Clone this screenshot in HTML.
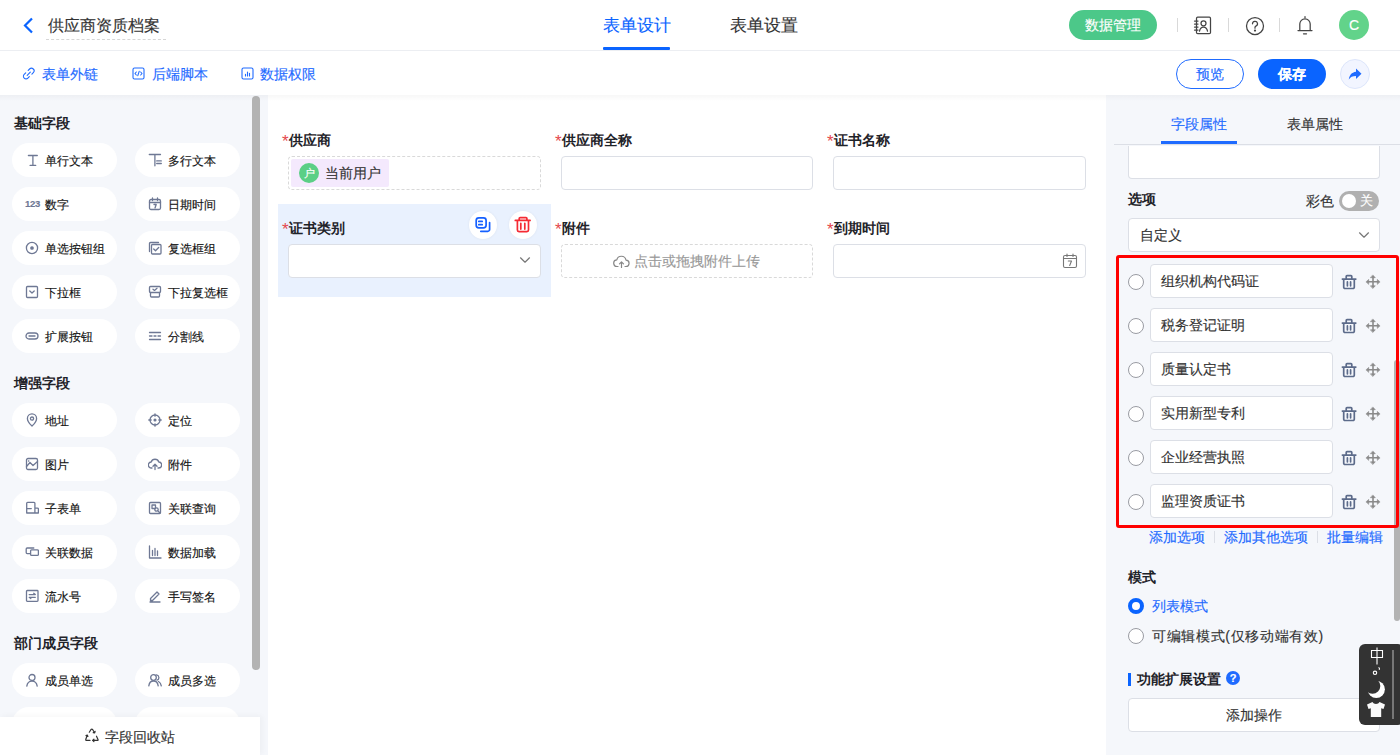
<!DOCTYPE html>
<html><head><meta charset="utf-8">
<style>
*{box-sizing:border-box;margin:0;padding:0}
html,body{width:1400px;height:755px;overflow:hidden;background:#fff;font-family:"Liberation Sans",sans-serif;color:#333;-webkit-text-stroke:0.15px}
.a{position:absolute}
svg{display:block}
#hdr{left:0;top:0;width:1400px;height:51px;border-bottom:1px solid #eceef2;background:#fff}
#bar{left:0;top:51px;width:1400px;height:44px;background:#fff}
#left{left:0;top:95px;width:268px;height:660px;background:#f5f7fb}
#center{left:268px;top:95px;width:838px;height:660px;background:#fff}
#right{left:1106px;top:95px;width:294px;height:660px;background:#f5f7fb}
.shadow{left:0;top:95px;width:1400px;height:6px;background:linear-gradient(rgba(0,0,0,0.03),rgba(0,0,0,0))}
.h{font-size:14px;font-weight:bold;color:#1f2329;-webkit-text-stroke:0}
.pill{width:105px;height:34px;border-radius:17px;background:#fff;font-size:12px;color:#141414;line-height:34px}
.pill .ic{position:absolute;left:13px;top:10px;width:14px;height:14px}
.pill span{position:absolute;left:33px;top:1px}
.lbl{font-size:14px;font-weight:bold;color:#1f2329;line-height:16px;-webkit-text-stroke:0}
.lbl i{font-style:normal;color:#e5484d;font-weight:normal;display:inline-block;width:7px;font-size:17px;vertical-align:top;line-height:19px}
.inp{border:1px solid #dcdfe6;border-radius:4px;background:#fff}
.opt .r{position:absolute;width:16px;height:16px;border:1px solid #9a9ca3;border-radius:50%;background:#fff}
.link{color:#1f6bff;font-size:14px}
b,.bd{-webkit-text-stroke:0}
</style></head><body>
<!-- header -->
<div id="hdr" class="a"></div>
<div class="a" style="left:22px;top:17px"><svg width="12" height="17" viewBox="0 0 12 17"><path d="M10 1.5 L3 8.5 L10 15.5" fill="none" stroke="#0a64ff" stroke-width="2.2"/></svg></div>
<div class="a" style="left:48px;top:15px;font-size:16px;color:#333;line-height:22px">供应商资质档案</div>
<div class="a" style="left:46px;top:39px;width:120px;border-top:1px dashed #d6d6d6"></div>
<div class="a" style="left:603px;top:13px;font-size:16.5px;color:#0a64ff;line-height:24px">表单设计</div>
<div class="a" style="left:603px;top:47px;width:67px;height:3px;background:#0a64ff;border-radius:1px"></div>
<div class="a" style="left:730px;top:13px;font-size:16.5px;color:#333;line-height:24px">表单设置</div>
<div class="a" style="left:1069px;top:10px;width:88px;height:30px;border-radius:15px;background:#4cc889;color:#fff;font-size:14px;line-height:30px;text-align:center">数据管理</div>
<div id="bar" class="a"></div>
<div id="left" class="a"></div>
<div id="center" class="a"></div>
<div id="right" class="a"></div>
<div class="a" style="left:1177px;top:18px;width:1px;height:14px;background:#d9d9d9"></div>
<div class="a" style="left:1228px;top:18px;width:1px;height:14px;background:#d9d9d9"></div>
<div class="a" style="left:1279px;top:18px;width:1px;height:14px;background:#d9d9d9"></div>
<div class="a" style="left:1193px;top:16px"><svg width="19" height="19" viewBox="0 0 19 19" fill="none" stroke="#444" stroke-width="1.25" stroke-linecap="round" stroke-linejoin="round"><rect x="3.5" y="1.2" width="14" height="16.5" rx="1.2"/><path d="M1.5 5h3.5M1.5 8h3.5M1.5 11h3.5M1.5 14h3.5"/><circle cx="10.5" cy="7.3" r="2.5"/><path d="M6.5 15.2c0.4-2.6 2-4.2 4-4.2s3.6 1.6 4 4.2"/></svg></div>
<div class="a" style="left:1245px;top:16px"><svg width="20" height="20" viewBox="0 0 20 20" fill="none" stroke="#444" stroke-width="1.25" stroke-linecap="round" stroke-linejoin="round"><circle cx="10" cy="10" r="8.5"/><path d="M7.5 7.8a2.5 2.5 0 1 1 3.4 2.3c-0.6 0.3-0.9 0.8-0.9 1.5v0.6"/><circle cx="10" cy="14.6" r="0.5" fill="#444"/></svg></div>
<div class="a" style="left:1296px;top:15px"><svg width="18" height="21" viewBox="0 0 18 21" fill="none" stroke="#444" stroke-width="1.25" stroke-linecap="round" stroke-linejoin="round"><path d="M9 1.5v1.3M3.8 15.5V9a5.2 5.2 0 0 1 10.4 0v6.5M2 15.5h14M7.5 18.8h3"/></svg></div>
<div class="a" style="left:1339px;top:10px;width:30px;height:30px;border-radius:50%;background:#62d38a;color:#fff;font-size:14px;line-height:30px;text-align:center">C</div>
<div class="a" style="left:22px;top:67px"><svg width="13" height="13" viewBox="0 0 13 13" fill="none" stroke="#1f6bff" stroke-width="1.1" stroke-linecap="round" stroke-linejoin="round"><path d="M5.2 8.3L8.3 5.2M6.2 3.4l1.4-1.4a2.6 2.6 0 0 1 3.7 3.7L9.9 7.1M3.7 5.9L2.2 7.4a2.6 2.6 0 0 0 3.7 3.7l1.4-1.4"/></svg></div>
<div class="a" style="left:42px;top:64px;font-size:14px;color:#1f6bff;line-height:20px">表单外链</div>
<div class="a" style="left:132px;top:67px"><svg width="13" height="13" viewBox="0 0 13 13" fill="none" stroke="#1f6bff" stroke-width="1.1" stroke-linecap="round" stroke-linejoin="round"><rect x="1" y="1" width="11" height="11" rx="1.5"/><path d="M4.3 5L3 6.5 4.3 8M8.7 5L10 6.5 8.7 8M7.2 4.3L5.8 8.7"/></svg></div>
<div class="a" style="left:152px;top:64px;font-size:14px;color:#1f6bff;line-height:20px">后端脚本</div>
<div class="a" style="left:241px;top:67px"><svg width="13" height="13" viewBox="0 0 13 13" fill="none" stroke="#1f6bff" stroke-width="1.1" stroke-linecap="round" stroke-linejoin="round"><rect x="1" y="1" width="11" height="11" rx="1.5"/><path d="M4.5 9V7.3M6.5 9V5M8.5 9V6.3"/></svg></div>
<div class="a" style="left:260px;top:64px;font-size:14px;color:#1f6bff;line-height:20px">数据权限</div>
<div class="a" style="left:1176px;top:59px;width:68px;height:30px;border-radius:15px;border:1px solid #1f6bff;color:#1f6bff;font-size:14px;line-height:28px;text-align:center;background:#fff">预览</div>
<div class="a" style="left:1258px;top:59px;width:68px;height:30px;border-radius:15px;background:#0a64ff;color:#fff;font-size:14px;font-weight:bold;line-height:30px;text-align:center">保存</div>
<div class="a" style="left:1340px;top:59px;width:30px;height:30px;border-radius:50%;background:#f2f5ff;border:1px solid #dde6fb"></div>
<div class="a" style="left:1347px;top:66px"><svg width="16" height="16" viewBox="0 0 16 16"><path d="M9 2.5L14.5 7.8 9 13V10C5.5 10 3.3 11 1.8 13.5 2.3 9.3 4.5 6.3 9 5.7z" fill="#1f6bff"/></svg></div>
<div class="a h" style="left:14px;top:115px">基础字段</div>
<div class="a pill" style="left:12px;top:143px"><div class="ic"><svg width="14" height="14" viewBox="0 0 14 14" fill="none" stroke="#6e7894" stroke-width="1.3" stroke-linecap="round" stroke-linejoin="round"><path d="M3.4 2.5h8.9M5.1 12.4h5.6M7.9 2.5v9.9"/></svg></div><span>单行文本</span></div>
<div class="a pill" style="left:135px;top:143px"><div class="ic"><svg width="14" height="14" viewBox="0 0 14 14" fill="none" stroke="#6e7894" stroke-width="1.3" stroke-linecap="round" stroke-linejoin="round"><path d="M1.3 1.5h11.2M6.9 1.5v11.3M8.7 7.9h4.6M8.7 10.5h4.6"/></svg></div><span>多行文本</span></div>
<div class="a pill" style="left:12px;top:187px"><div class="ic"><div style="font:bold 9.5px 'Liberation Sans',sans-serif;color:#6e7894;letter-spacing:-0.3px;line-height:14px">123</div></div><span>数字</span></div>
<div class="a pill" style="left:135px;top:187px"><div class="ic"><svg width="14" height="14" viewBox="0 0 14 14" fill="none" stroke="#6e7894" stroke-width="1.3" stroke-linecap="round" stroke-linejoin="round"><rect x="1.5" y="2.5" width="11" height="10" rx="1.5"/><path d="M1.5 5.5h11M4.5 1v2.5M9.5 1v2.5M6 7.5h2.2l-1.2 3.5"/></svg></div><span>日期时间</span></div>
<div class="a pill" style="left:12px;top:231px"><div class="ic"><svg width="14" height="14" viewBox="0 0 14 14" fill="none" stroke="#6e7894" stroke-width="1.3" stroke-linecap="round" stroke-linejoin="round"><circle cx="7" cy="7" r="5.6"/><circle cx="7" cy="7" r="1.2" fill="#6e7894"/></svg></div><span>单选按钮组</span></div>
<div class="a pill" style="left:135px;top:231px"><div class="ic"><svg width="14" height="14" viewBox="0 0 14 14" fill="none" stroke="#6e7894" stroke-width="1.3" stroke-linecap="round" stroke-linejoin="round"><path d="M1.5 10.5V2.5a1 1 0 0 1 1-1h8"/><rect x="3.5" y="3.5" width="9.5" height="9.5" rx="1"/><path d="M5.7 8l1.8 1.8 3.2-3.3"/></svg></div><span>复选框组</span></div>
<div class="a pill" style="left:12px;top:275px"><div class="ic"><svg width="14" height="14" viewBox="0 0 14 14" fill="none" stroke="#6e7894" stroke-width="1.3" stroke-linecap="round" stroke-linejoin="round"><rect x="1.5" y="1.5" width="11" height="11" rx="1"/><path d="M4.8 6l2.2 2 2.2-2"/></svg></div><span>下拉框</span></div>
<div class="a pill" style="left:135px;top:275px"><div class="ic"><svg width="14" height="14" viewBox="0 0 14 14" fill="none" stroke="#6e7894" stroke-width="1.3" stroke-linecap="round" stroke-linejoin="round"><rect x="1.5" y="1.5" width="11" height="6" rx="1"/><path d="M2.5 7.5v3.5a1 1 0 0 0 1 1h7a1 1 0 0 0 1-1v-3.5M5 4.2l1.5 1.2 2.5-2.2"/></svg></div><span>下拉复选框</span></div>
<div class="a pill" style="left:12px;top:319px"><div class="ic"><svg width="14" height="14" viewBox="0 0 14 14" fill="none" stroke="#6e7894" stroke-width="1.3" stroke-linecap="round" stroke-linejoin="round"><rect x="1" y="4" width="12" height="6" rx="3"/><path d="M4 7h6"/></svg></div><span>扩展按钮</span></div>
<div class="a pill" style="left:135px;top:319px"><div class="ic"><svg width="14" height="14" viewBox="0 0 14 14" fill="none" stroke="#6e7894" stroke-width="1.3" stroke-linecap="round" stroke-linejoin="round"><path d="M1.5 3.5h11M1.5 10.5h11M1.5 7h2.5M6 7h2M10 7h2.5"/></svg></div><span>分割线</span></div>
<div class="a h" style="left:14px;top:375px">增强字段</div>
<div class="a pill" style="left:12px;top:403px"><div class="ic"><svg width="14" height="14" viewBox="0 0 14 14" fill="none" stroke="#6e7894" stroke-width="1.3" stroke-linecap="round" stroke-linejoin="round"><path d="M7 13s-4.6-4.2-4.6-7.6a4.6 4.6 0 0 1 9.2 0C11.6 8.8 7 13 7 13z"/><circle cx="7" cy="5.6" r="1.6"/></svg></div><span>地址</span></div>
<div class="a pill" style="left:135px;top:403px"><div class="ic"><svg width="14" height="14" viewBox="0 0 14 14" fill="none" stroke="#6e7894" stroke-width="1.3" stroke-linecap="round" stroke-linejoin="round"><circle cx="7" cy="7" r="5"/><circle cx="7" cy="7" r="0.9" fill="#6e7894"/><path d="M7 0.8v2.4M7 10.8v2.4M0.8 7h2.4M10.8 7h2.4"/></svg></div><span>定位</span></div>
<div class="a pill" style="left:12px;top:447px"><div class="ic"><svg width="14" height="14" viewBox="0 0 14 14" fill="none" stroke="#6e7894" stroke-width="1.3" stroke-linecap="round" stroke-linejoin="round"><rect x="1.5" y="1.5" width="11" height="11" rx="1.5"/><path d="M1.5 9.5l3.5-4 3 3 4.5-4M3.5 4h0.3"/></svg></div><span>图片</span></div>
<div class="a pill" style="left:135px;top:447px"><div class="ic"><svg width="14" height="14" viewBox="0 0 14 14" fill="none" stroke="#6e7894" stroke-width="1.3" stroke-linecap="round" stroke-linejoin="round"><path d="M4 11H3.5A3 3 0 0 1 3.2 5a4 4 0 0 1 7.6 0A3 3 0 0 1 10.5 11H10M7 7.5v5M5 9.3l2-2 2 2"/></svg></div><span>附件</span></div>
<div class="a pill" style="left:12px;top:491px"><div class="ic"><svg width="14" height="14" viewBox="0 0 14 14" fill="none" stroke="#6e7894" stroke-width="1.3" stroke-linecap="round" stroke-linejoin="round"><path d="M1.7 12V2.3q0-0.9 0.9-0.9h6.4q0.9 0 0.9 0.9V12zM9.9 7.2h2.6q0.9 0 0.9 0.9V12H1.7M1.7 7.6h4.6"/></svg></div><span>子表单</span></div>
<div class="a pill" style="left:135px;top:491px"><div class="ic"><svg width="14" height="14" viewBox="0 0 14 14" fill="none" stroke="#6e7894" stroke-width="1.3" stroke-linecap="round" stroke-linejoin="round"><rect x="1.5" y="1.5" width="11" height="11" rx="1"/><rect x="4" y="4" width="3.5" height="3.5"/><circle cx="8.5" cy="8.5" r="1.7"/><path d="M10 10l2 2"/></svg></div><span>关联查询</span></div>
<div class="a pill" style="left:12px;top:535px"><div class="ic"><svg width="14" height="14" viewBox="0 0 14 14" fill="none" stroke="#6e7894" stroke-width="1.3" stroke-linecap="round" stroke-linejoin="round"><path d="M8.8 3H2.2q-1 0-1 1v3.6q0 1 1 1h3.2"/><rect x="5.6" y="4.8" width="7.8" height="5.6" rx="1"/></svg></div><span>关联数据</span></div>
<div class="a pill" style="left:135px;top:535px"><div class="ic"><svg width="14" height="14" viewBox="0 0 14 14" fill="none" stroke="#6e7894" stroke-width="1.3" stroke-linecap="round" stroke-linejoin="round"><path d="M1.5 1v12h11.5M4.5 5.5v5M7 3.5v7M9.5 6v4.5"/></svg></div><span>数据加载</span></div>
<div class="a pill" style="left:12px;top:579px"><div class="ic"><svg width="14" height="14" viewBox="0 0 14 14" fill="none" stroke="#6e7894" stroke-width="1.3" stroke-linecap="round" stroke-linejoin="round"><rect x="1.5" y="1.5" width="11.5" height="10.8" rx="0.8"/><path d="M4.2 5.6h6.1l-1.6-1.3M10.3 8.3H4.2l1.6 1.3"/></svg></div><span>流水号</span></div>
<div class="a pill" style="left:135px;top:579px"><div class="ic"><svg width="14" height="14" viewBox="0 0 14 14" fill="none" stroke="#6e7894" stroke-width="1.3" stroke-linecap="round" stroke-linejoin="round"><path d="M2.5 9.5l6.5-6.5 2 2-6.5 6.5H2.5zM2 13h10"/></svg></div><span>手写签名</span></div>
<div class="a h" style="left:14px;top:635px">部门成员字段</div>
<div class="a pill" style="left:12px;top:663px"><div class="ic"><svg width="14" height="14" viewBox="0 0 14 14" fill="none" stroke="#6e7894" stroke-width="1.3" stroke-linecap="round" stroke-linejoin="round"><circle cx="7" cy="4.5" r="3"/><path d="M1.8 13.2c0.5-3 2.5-5 5.2-5s4.7 2 5.2 5"/></svg></div><span>成员单选</span></div>
<div class="a pill" style="left:135px;top:663px"><div class="ic"><svg width="14" height="14" viewBox="0 0 14 14" fill="none" stroke="#6e7894" stroke-width="1.3" stroke-linecap="round" stroke-linejoin="round"><circle cx="5.5" cy="4.5" r="2.8"/><path d="M0.8 12.8c0.4-2.8 2.2-4.8 4.7-4.8s4.3 2 4.7 4.8M8.5 1.8a2.8 2.8 0 0 1 0.5 5.4M10.5 8.5c1.5 0.8 2.5 2.4 2.8 4.3"/></svg></div><span>成员多选</span></div>
<div class="a pill" style="left:12px;top:707px"></div><div class="a pill" style="left:135px;top:707px"></div>
<div class="a" style="left:252px;top:96px;width:8px;height:574px;border-radius:4px;background:#b3b3b3"></div>
<div class="a" style="left:0;top:717px;width:260px;height:38px;background:#fff;box-shadow:2px -1px 6px rgba(0,0,0,0.04)"></div>
<div class="a" style="left:80px;top:722px"><svg width="24" height="26" viewBox="0 0 24 26" fill="none" stroke="#333" stroke-width="1.2" stroke-linecap="round" stroke-linejoin="round"><path d="M9.3 10.2L11 7.5Q11.8 6.6 12.6 7.5L14.6 10.8M13.2 10.6l1.5 0.3 0.4-1.5M7.3 13.2L5.8 17.3Q5.5 18.4 6.6 18.4H10M6 13.6l1.3-0.5 0.6 1.3M12.6 18.4H17.4Q18.4 18.4 18 17.4L16.5 14.2M13.9 17.2l-1.3 1.2 1.3 1.1"/></svg></div>
<div class="a" style="left:105px;top:727px;font-size:14px;color:#333;line-height:20px">字段回收站</div>
<div class="a" style="left:278px;top:204px;width:273px;height:93px;background:#e9f1fe"></div>
<div class="a lbl" style="left:282px;top:132px"><i>*</i>供应商</div>
<div class="a lbl" style="left:555px;top:132px"><i>*</i>供应商全称</div>
<div class="a lbl" style="left:827px;top:132px"><i>*</i>证书名称</div>
<div class="a" style="left:288px;top:156px;width:253px;height:34px;border:1px dashed #d9d9d9;border-radius:4px"></div>
<div class="a" style="left:291px;top:159px;width:98px;height:28px;background:#f4e9fd;border-radius:2px"></div>
<div class="a" style="left:299px;top:163px;width:20px;height:20px;border-radius:50%;background:#5bcf86;color:#fff;font-size:11px;line-height:20px;text-align:center">户</div>
<div class="a" style="left:325px;top:163px;font-size:14px;color:#333;line-height:20px">当前用户</div>
<div class="a inp" style="left:561px;top:156px;width:252px;height:34px"></div>
<div class="a inp" style="left:833px;top:156px;width:253px;height:34px"></div>
<div class="a lbl" style="left:282px;top:220px"><i>*</i>证书类别</div>
<div class="a lbl" style="left:555px;top:220px"><i>*</i>附件</div>
<div class="a lbl" style="left:827px;top:220px"><i>*</i>到期时间</div>
<div class="a" style="left:469px;top:211px;width:28px;height:28px;border-radius:50%;background:#fff;box-shadow:0 0 3px rgba(0,0,0,0.06)"></div>
<div class="a" style="left:469px;top:211px"><svg width="28" height="28" viewBox="0 0 28 28" fill="none" stroke="#1560ff" stroke-width="1.7" stroke-linecap="round" stroke-linejoin="round"><rect x="7.2" y="6.9" width="9.9" height="9.9" rx="2.6"/><path d="M9.8 10.4h3.4M9.8 13.7h3.4M11.8 20.3h7a1.8 1.8 0 0 0 1.8-1.8V11.6"/></svg></div>
<div class="a" style="left:509px;top:211px;width:28px;height:28px;border-radius:50%;background:#fff;box-shadow:0 0 3px rgba(0,0,0,0.06)"></div>
<div class="a" style="left:509px;top:211px"><svg width="28" height="28" viewBox="0 0 28 28" fill="none" stroke="#f52a33" stroke-width="1.7" stroke-linecap="round" stroke-linejoin="round"><path d="M6.3 9.4h14.8M10.2 9.2V7.6q0-0.9 0.9-0.9h5.9q0.9 0 0.9 0.9v1.6M8.4 9.8v9.2a1.6 1.6 0 0 0 1.6 1.6h7.9a1.6 1.6 0 0 0 1.6-1.6V9.8M11.8 12.3v5.8M15.8 12.3v5.8"/></svg></div>
<div class="a inp" style="left:288px;top:244px;width:253px;height:34px"></div>
<div class="a" style="left:519px;top:256px"><svg width="12" height="8" viewBox="0 0 12 8" fill="none" stroke="#777" stroke-width="1.2" stroke-linecap="round" stroke-linejoin="round"><path d="M1.5 1.8l4.5 4.4 4.5-4.4"/></svg></div>
<div class="a" style="left:561px;top:244px;width:252px;height:34px;border:1px dashed #d9d9d9;border-radius:4px"></div>
<div class="a" style="left:613px;top:254px"><svg width="17" height="14" viewBox="0 0 17 14" fill="none" stroke="#888" stroke-width="1.2" stroke-linecap="round" stroke-linejoin="round"><path d="M5 12.5H4.2a3.3 3.3 0 0 1-0.4-6.6 4.7 4.7 0 0 1 9.2 0.2 3.2 3.2 0 0 1-0.3 6.4H12M8.5 8v5.5M6.5 9.8l2-2 2 2"/></svg></div>
<div class="a" style="left:634px;top:251px;font-size:14px;color:#999;line-height:20px">点击或拖拽附件上传</div>
<div class="a inp" style="left:833px;top:244px;width:253px;height:34px"></div>
<div class="a" style="left:1062px;top:253px"><svg width="16" height="16" viewBox="0 0 16 16" fill="none" stroke="#777" stroke-width="1.1" stroke-linecap="round" stroke-linejoin="round"><rect x="1.5" y="2.5" width="13" height="12" rx="1.5"/><path d="M1.5 5.5h13M5 1v2.5M11 1v2.5M6.3 8h3.2l-1.8 4.5"/></svg></div>
<div class="a" style="left:1171px;top:114px;font-size:14px;color:#1f6bff;line-height:20px">字段属性</div>
<div class="a" style="left:1287px;top:114px;font-size:14px;color:#333;line-height:20px">表单属性</div>
<div class="a" style="left:1114px;top:144px;width:286px;height:1px;background:#dcdfe6"></div>
<div class="a" style="left:1161px;top:141px;width:76px;height:3px;background:#1f6bff"></div>
<div class="a inp" style="left:1128px;top:146px;width:252px;height:33px;border-top:none;border-radius:0 0 4px 4px"></div>
<div class="a" style="left:1128px;top:189px;font-size:14px;font-weight:bold;color:#1f2329;line-height:20px;-webkit-text-stroke:0">选项</div>
<div class="a" style="left:1306px;top:191px;font-size:14px;color:#333;line-height:20px">彩色</div>
<div class="a" style="left:1339px;top:191px;width:40px;height:20px;border-radius:10px;background:#b0b0b0"></div>
<div class="a" style="left:1342px;top:194px;width:14px;height:14px;border-radius:50%;background:#fff"></div>
<div class="a" style="left:1360px;top:191px;font-size:13px;color:#fff;line-height:20px">关</div>
<div class="a inp" style="left:1128px;top:218px;width:252px;height:34px"></div>
<div class="a" style="left:1140px;top:225px;font-size:14px;color:#333;line-height:20px">自定义</div>
<div class="a" style="left:1358px;top:231px"><svg width="12" height="8" viewBox="0 0 12 8" fill="none" stroke="#777" stroke-width="1.2" stroke-linecap="round" stroke-linejoin="round"><path d="M1.5 1.8l4.5 4.4 4.5-4.4"/></svg></div>
<div class="a" style="left:1394px;top:360px;width:6px;height:261px;border-radius:3px;background:#b3b3b3"></div>
<div class="a" style="left:1116px;top:255px;width:283px;height:273px;border:3px solid #ff0000;border-radius:3px"></div>
<div class="a" style="left:1128px;top:274px;width:16px;height:16px;border:1px solid #9a9ca3;border-radius:50%;background:#fff"></div>
<div class="a inp" style="left:1150px;top:264px;width:183px;height:34px"></div>
<div class="a" style="left:1161px;top:271px;font-size:14px;color:#333;line-height:20px">组织机构代码证</div>
<div class="a" style="left:1341px;top:274px"><svg width="16" height="16" viewBox="0 0 16 16" fill="none" stroke="#5c6b8a" stroke-width="1.7" stroke-linecap="round" stroke-linejoin="round"><path d="M1.4 5.1h13.4M5.2 4.8V2.5q0-0.8 0.8-0.8h4q0.8 0 0.8 0.8v2.3M2.7 5.6v7.6a1.3 1.3 0 0 0 1.3 1.3h8a1.3 1.3 0 0 0 1.3-1.3V5.6M6.4 7.9v3.9M9.6 7.9v3.9"/></svg></div>
<div class="a" style="left:1365px;top:274px"><svg width="16" height="16" viewBox="0 0 16 16" fill="none" stroke="#8a8a8a" stroke-width="1.6" stroke-linecap="round" stroke-linejoin="round"><path d="M8 3v9.5M3 7.7h10"/><path d="M8 1.2l2.3 2.5H5.7zM8 14.3l2.3-2.5H5.7zM1.2 7.7l2.5-2.3v4.6zM14.8 7.7l-2.5-2.3v4.6z" fill="#8a8a8a" stroke-width="0.6"/></svg></div>
<div class="a" style="left:1128px;top:318px;width:16px;height:16px;border:1px solid #9a9ca3;border-radius:50%;background:#fff"></div>
<div class="a inp" style="left:1150px;top:308px;width:183px;height:34px"></div>
<div class="a" style="left:1161px;top:315px;font-size:14px;color:#333;line-height:20px">税务登记证明</div>
<div class="a" style="left:1341px;top:318px"><svg width="16" height="16" viewBox="0 0 16 16" fill="none" stroke="#5c6b8a" stroke-width="1.7" stroke-linecap="round" stroke-linejoin="round"><path d="M1.4 5.1h13.4M5.2 4.8V2.5q0-0.8 0.8-0.8h4q0.8 0 0.8 0.8v2.3M2.7 5.6v7.6a1.3 1.3 0 0 0 1.3 1.3h8a1.3 1.3 0 0 0 1.3-1.3V5.6M6.4 7.9v3.9M9.6 7.9v3.9"/></svg></div>
<div class="a" style="left:1365px;top:318px"><svg width="16" height="16" viewBox="0 0 16 16" fill="none" stroke="#8a8a8a" stroke-width="1.6" stroke-linecap="round" stroke-linejoin="round"><path d="M8 3v9.5M3 7.7h10"/><path d="M8 1.2l2.3 2.5H5.7zM8 14.3l2.3-2.5H5.7zM1.2 7.7l2.5-2.3v4.6zM14.8 7.7l-2.5-2.3v4.6z" fill="#8a8a8a" stroke-width="0.6"/></svg></div>
<div class="a" style="left:1128px;top:362px;width:16px;height:16px;border:1px solid #9a9ca3;border-radius:50%;background:#fff"></div>
<div class="a inp" style="left:1150px;top:352px;width:183px;height:34px"></div>
<div class="a" style="left:1161px;top:359px;font-size:14px;color:#333;line-height:20px">质量认定书</div>
<div class="a" style="left:1341px;top:362px"><svg width="16" height="16" viewBox="0 0 16 16" fill="none" stroke="#5c6b8a" stroke-width="1.7" stroke-linecap="round" stroke-linejoin="round"><path d="M1.4 5.1h13.4M5.2 4.8V2.5q0-0.8 0.8-0.8h4q0.8 0 0.8 0.8v2.3M2.7 5.6v7.6a1.3 1.3 0 0 0 1.3 1.3h8a1.3 1.3 0 0 0 1.3-1.3V5.6M6.4 7.9v3.9M9.6 7.9v3.9"/></svg></div>
<div class="a" style="left:1365px;top:362px"><svg width="16" height="16" viewBox="0 0 16 16" fill="none" stroke="#8a8a8a" stroke-width="1.6" stroke-linecap="round" stroke-linejoin="round"><path d="M8 3v9.5M3 7.7h10"/><path d="M8 1.2l2.3 2.5H5.7zM8 14.3l2.3-2.5H5.7zM1.2 7.7l2.5-2.3v4.6zM14.8 7.7l-2.5-2.3v4.6z" fill="#8a8a8a" stroke-width="0.6"/></svg></div>
<div class="a" style="left:1128px;top:406px;width:16px;height:16px;border:1px solid #9a9ca3;border-radius:50%;background:#fff"></div>
<div class="a inp" style="left:1150px;top:396px;width:183px;height:34px"></div>
<div class="a" style="left:1161px;top:403px;font-size:14px;color:#333;line-height:20px">实用新型专利</div>
<div class="a" style="left:1341px;top:406px"><svg width="16" height="16" viewBox="0 0 16 16" fill="none" stroke="#5c6b8a" stroke-width="1.7" stroke-linecap="round" stroke-linejoin="round"><path d="M1.4 5.1h13.4M5.2 4.8V2.5q0-0.8 0.8-0.8h4q0.8 0 0.8 0.8v2.3M2.7 5.6v7.6a1.3 1.3 0 0 0 1.3 1.3h8a1.3 1.3 0 0 0 1.3-1.3V5.6M6.4 7.9v3.9M9.6 7.9v3.9"/></svg></div>
<div class="a" style="left:1365px;top:406px"><svg width="16" height="16" viewBox="0 0 16 16" fill="none" stroke="#8a8a8a" stroke-width="1.6" stroke-linecap="round" stroke-linejoin="round"><path d="M8 3v9.5M3 7.7h10"/><path d="M8 1.2l2.3 2.5H5.7zM8 14.3l2.3-2.5H5.7zM1.2 7.7l2.5-2.3v4.6zM14.8 7.7l-2.5-2.3v4.6z" fill="#8a8a8a" stroke-width="0.6"/></svg></div>
<div class="a" style="left:1128px;top:450px;width:16px;height:16px;border:1px solid #9a9ca3;border-radius:50%;background:#fff"></div>
<div class="a inp" style="left:1150px;top:440px;width:183px;height:34px"></div>
<div class="a" style="left:1161px;top:447px;font-size:14px;color:#333;line-height:20px">企业经营执照</div>
<div class="a" style="left:1341px;top:450px"><svg width="16" height="16" viewBox="0 0 16 16" fill="none" stroke="#5c6b8a" stroke-width="1.7" stroke-linecap="round" stroke-linejoin="round"><path d="M1.4 5.1h13.4M5.2 4.8V2.5q0-0.8 0.8-0.8h4q0.8 0 0.8 0.8v2.3M2.7 5.6v7.6a1.3 1.3 0 0 0 1.3 1.3h8a1.3 1.3 0 0 0 1.3-1.3V5.6M6.4 7.9v3.9M9.6 7.9v3.9"/></svg></div>
<div class="a" style="left:1365px;top:450px"><svg width="16" height="16" viewBox="0 0 16 16" fill="none" stroke="#8a8a8a" stroke-width="1.6" stroke-linecap="round" stroke-linejoin="round"><path d="M8 3v9.5M3 7.7h10"/><path d="M8 1.2l2.3 2.5H5.7zM8 14.3l2.3-2.5H5.7zM1.2 7.7l2.5-2.3v4.6zM14.8 7.7l-2.5-2.3v4.6z" fill="#8a8a8a" stroke-width="0.6"/></svg></div>
<div class="a" style="left:1128px;top:494px;width:16px;height:16px;border:1px solid #9a9ca3;border-radius:50%;background:#fff"></div>
<div class="a inp" style="left:1150px;top:484px;width:183px;height:34px"></div>
<div class="a" style="left:1161px;top:491px;font-size:14px;color:#333;line-height:20px">监理资质证书</div>
<div class="a" style="left:1341px;top:494px"><svg width="16" height="16" viewBox="0 0 16 16" fill="none" stroke="#5c6b8a" stroke-width="1.7" stroke-linecap="round" stroke-linejoin="round"><path d="M1.4 5.1h13.4M5.2 4.8V2.5q0-0.8 0.8-0.8h4q0.8 0 0.8 0.8v2.3M2.7 5.6v7.6a1.3 1.3 0 0 0 1.3 1.3h8a1.3 1.3 0 0 0 1.3-1.3V5.6M6.4 7.9v3.9M9.6 7.9v3.9"/></svg></div>
<div class="a" style="left:1365px;top:494px"><svg width="16" height="16" viewBox="0 0 16 16" fill="none" stroke="#8a8a8a" stroke-width="1.6" stroke-linecap="round" stroke-linejoin="round"><path d="M8 3v9.5M3 7.7h10"/><path d="M8 1.2l2.3 2.5H5.7zM8 14.3l2.3-2.5H5.7zM1.2 7.7l2.5-2.3v4.6zM14.8 7.7l-2.5-2.3v4.6z" fill="#8a8a8a" stroke-width="0.6"/></svg></div>
<div class="a link" style="left:1149px;top:527px;line-height:20px">添加选项</div>
<div class="a" style="left:1214px;top:531px;width:1px;height:12px;background:#dcdfe6"></div>
<div class="a link" style="left:1224px;top:527px;line-height:20px">添加其他选项</div>
<div class="a" style="left:1317px;top:531px;width:1px;height:12px;background:#dcdfe6"></div>
<div class="a link" style="left:1327px;top:527px;line-height:20px">批量编辑</div>
<div class="a" style="left:1128px;top:567px;font-size:14px;font-weight:bold;color:#1f2329;line-height:20px;-webkit-text-stroke:0">模式</div>
<div class="a" style="left:1128px;top:598px;width:16px;height:16px;border-radius:50%;border:4.5px solid #0a64ff;background:#fff"></div>
<div class="a" style="left:1152px;top:596px;font-size:14px;color:#1f6bff;line-height:20px">列表模式</div>
<div class="a" style="left:1128px;top:628px;width:16px;height:16px;border-radius:50%;border:1px solid #9a9ca3;background:#fff"></div>
<div class="a" style="left:1152px;top:626px;font-size:14px;color:#333;line-height:20px"><span style="letter-spacing:0.65px">可编辑模式(仅移动端有效</span>)</div>
<div class="a" style="left:1128px;top:673px;width:3px;height:13px;background:#0a64ff"></div>
<div class="a" style="left:1137px;top:669px;font-size:14px;font-weight:bold;color:#1f2329;line-height:20px;-webkit-text-stroke:0">功能扩展设置</div>
<div class="a" style="left:1226px;top:671px;width:14px;height:14px;border-radius:50%;background:#1f6bff;color:#fff;font-size:11px;font-weight:bold;line-height:14px;text-align:center">?</div>
<div class="a" style="left:1128px;top:698px;width:252px;height:34px;border:1px solid #dcdfe6;border-radius:4px;background:#fff;font-size:14px;color:#333;line-height:32px;text-align:center">添加操作</div>
<div class="a" style="left:1359px;top:644px;width:45px;height:81px;border-radius:6px;background:#333"></div>
<div class="a" style="left:1392px;top:650px;width:2px;height:69px;background:#777"></div>
<div class="a" style="left:1366px;top:646px"><svg width="22" height="32" viewBox="0 0 22 32" fill="none" stroke="#fff" stroke-width="1.1"><path d="M5.5 4.5h11v7h-11zM11 1.5v17"/><circle cx="9" cy="26.8" r="1.7"/><path d="M12.5 21.5c1 0.3 1.3 1.2 0.6 2.2"/></svg></div>
<div class="a" style="left:1367px;top:680px"><svg width="18" height="19" viewBox="0 0 18 19"><defs><mask id="mm"><rect width="18" height="19" fill="#fff"/><circle cx="5.5" cy="6" r="7.8" fill="#000"/></mask></defs><circle cx="9.3" cy="9.3" r="8.6" fill="#fff" mask="url(#mm)"/></svg></div>
<div class="a" style="left:1366px;top:701px"><svg width="20" height="17" viewBox="0 0 20 17"><path d="M6.5 1L1 3.5l1.5 4.5 2.3-0.8V16h10.4V7.2l2.3 0.8L19 3.5 13.5 1c-0.6 1.2-1.9 1.9-3.5 1.9S7.1 2.2 6.5 1z" fill="#fafafa"/></svg></div><div class="a shadow"></div>
</body></html>
